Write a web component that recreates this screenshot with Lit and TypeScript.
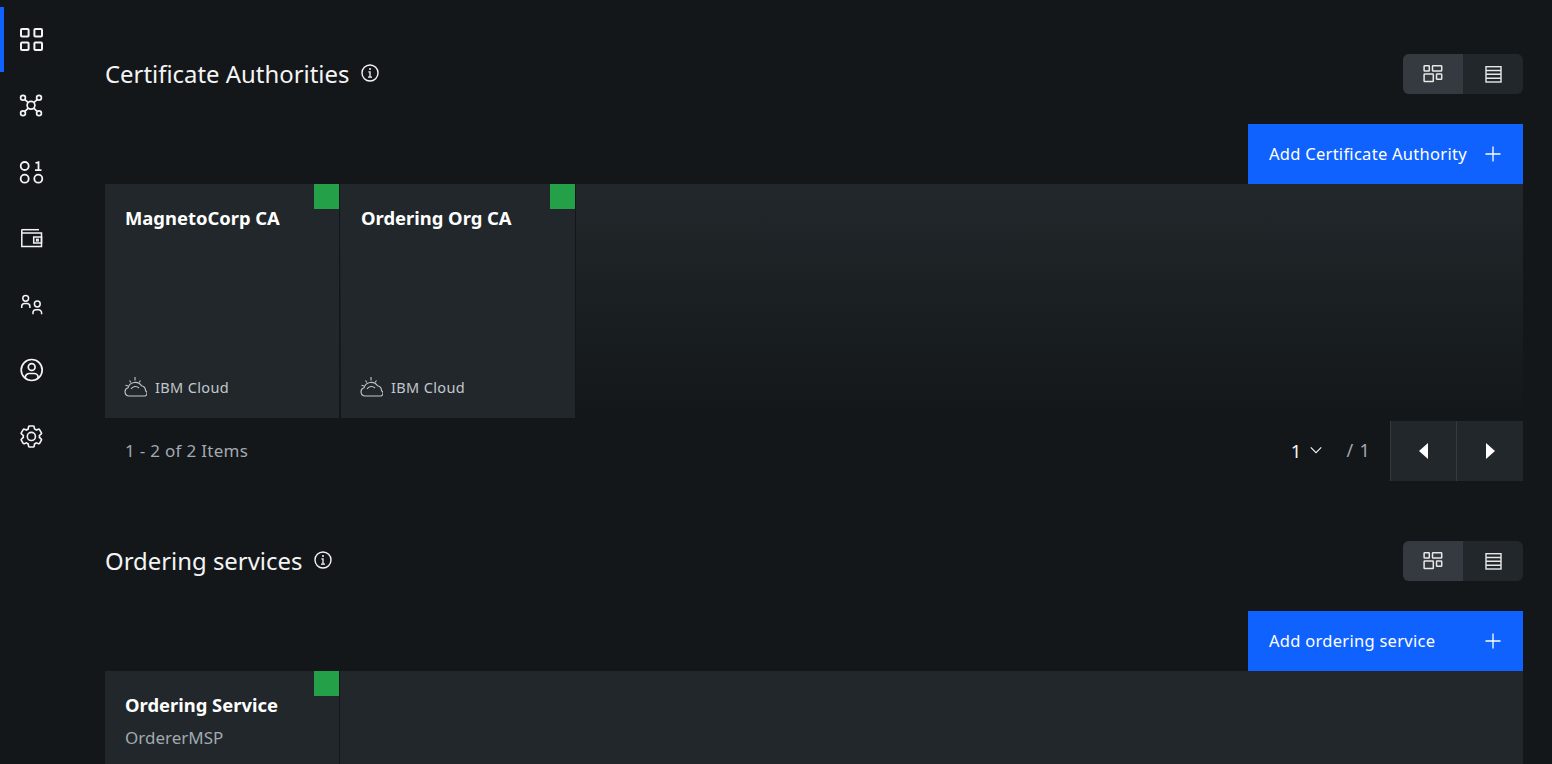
import { LitElement, html, css, svg } from "lit";
import { customElement } from "lit/decorators.js";

const ic = (size: number, body: unknown, box = size) => html`<svg width=${size} height=${size} viewBox="0 0 ${box} ${box}" fill="none" stroke="currentColor">${body}</svg>`;

const gear = "M27,16.76c0-.25,0-.5,0-.76s0-.51,0-.77l1.92-1.68A2,2,0,0,0,29.3,11L26.94,7a2,2,0,0,0-1.73-1,2,2,0,0,0-.64.1l-2.43.82a11.35,11.35,0,0,0-1.31-.75l-.51-2.52a2,2,0,0,0-2-1.61H13.64a2,2,0,0,0-2,1.61l-.51,2.52a11.48,11.48,0,0,0-1.32.75L7.43,6.06A2,2,0,0,0,6.79,6,2,2,0,0,0,5.06,7L2.7,11a2,2,0,0,0,.41,2.51L5,15.24c0,.25,0,.5,0,.76s0,.51,0,.77L3.11,18.45A2,2,0,0,0,2.7,21L5.06,25a2,2,0,0,0,1.73,1,2,2,0,0,0,.64-.1l2.43-.82a11.35,11.35,0,0,0,1.31.75l.51,2.52a2,2,0,0,0,2,1.61h4.72a2,2,0,0,0,2-1.61l.51-2.52a11.48,11.48,0,0,0,1.32-.75l2.42.82a2,2,0,0,0,.64.1,2,2,0,0,0,1.73-1L29.3,21a2,2,0,0,0-.41-2.51ZM25.21,24l-3.43-1.16a8.86,8.86,0,0,1-2.71,1.57L18.36,28H13.64l-.71-3.55a9.36,9.36,0,0,1-2.7-1.57L6.79,24,4.43,20l2.72-2.4a8.9,8.9,0,0,1,0-3.13L4.43,12,6.79,8l3.43,1.16a8.86,8.86,0,0,1,2.71-1.57L13.64,4h4.72l.71,3.55a9.36,9.36,0,0,1,2.7,1.57L25.21,8,27.57,12l-2.72,2.4a8.9,8.9,0,0,1,0,3.13L27.57,20Z M16,22a6,6,0,1,1,6-6A5.94,5.94,0,0,1,16,22Zm0-10a3.91,3.91,0,0,0-4,4,3.91,3.91,0,0,0,4,4,3.91,3.91,0,0,0,4-4A3.91,3.91,0,0,0,16,12Z";

const navIcons = [
  svg`<g stroke-width="2"><rect x="5" y="5" width="7.6" height="7.6" rx="1"/><rect x="18.400" y="5" width="7.6" height="7.6" rx="1"/><rect x="5" y="18.400" width="7.6" height="7.6" rx="1"/><rect x="18.400" y="18.400" width="7.6" height="7.6" rx="1"/></g>`,
  svg`<g stroke-width="1.7"><circle cx="15" cy="15.3" r="3.9"/><circle cx="7" cy="7.7" r="2.4"/><circle cx="23" cy="7.7" r="2.4"/><circle cx="7" cy="23.3" r="2.4"/><circle cx="23" cy="23.3" r="2.4"/><path d="M8.6 9.3l3.7 3.4M21.400 9.3l-3.700 3.400M8.600 21.700l3.700-3.500M21.400 21.700l-3.700-3.500"/></g>`,
  svg`<g stroke-width="1.8"><circle cx="8.700" cy="10" r="4"/><circle cx="8.700" cy="22.700" r="4"/><circle cx="22.300" cy="22.700" r="4"/><path d="M19.500 7l3-.8v8M19 14.200h6.500"/></g>`,
  svg`<g stroke-width="1.500"><path d="M5.500 7.700h17.500"/><path d="M5.800 7.700V24.500h19.700V11H5.800"/><rect x="17.700" y="15" width="7.800" height="6"/><rect x="20.500" y="17.200" width="1.800" height="1.800" stroke-width="1.200"/></g>`,
  svg`<g stroke-width="1.500"><circle cx="9.700" cy="10.300" r="2.900"/><path d="M5.700 20v-1.500a3 3 0 0 1 3-3h2.200a3 3 0 0 1 3 3V20"/><circle cx="21.300" cy="16" r="2.900"/><path d="M17 26.300v-1.500a3 3 0 0 1 3-3h2.600a3 3 0 0 1 3 3v1.500"/></g>`,
  svg`<g stroke-width="1.700"><circle cx="15.700" cy="16" r="10.500"/><circle cx="15.700" cy="13" r="3.400"/><path d="M9.300 24V23.500a4 4 0 0 1 4-4h4.800a4 4 0 0 1 4 4v.5"/></g>`,
  svg`<g transform="translate(2.400 3.500) scale(.81)"><path d="${gear}" fill="currentColor" stroke="none"/></g>`,
];

const tilesIcon = svg`<g stroke-width="1.500"><rect x="3.100" y="3.800" width="5.200" height="5.200" rx=".6"/><rect x="11.500" y="3.800" width="9.200" height="5.200" rx=".6"/><rect x="3.100" y="12.100" width="9.200" height="7.500" rx=".6"/><rect x="15.500" y="12.100" width="5.200" height="5.200" rx=".6"/></g>`;
const listIcon = svg`<g stroke-width="1.400"><rect x="5" y="4.700" width="15" height="15.300"/><path d="M5 8.500h15M5 12.300h15M5 16.200h15"/></g>`;
const plus = svg`<path d="M10 2.500v15M2.500 10h15" stroke-width="1.300"/>`;
const info = svg`<g stroke-width="1.400"><circle cx="10" cy="10" r="8"/><path d="M8 14.200h4M10 14.200V8.800H8.400" stroke-width="1.300"/><circle cx="10" cy="6" r="1" fill="currentColor" stroke="none"/></g>`;
const cloud = svg`<g stroke-width="1.100"><path d="M6 20a4.200 4.200 0 0 1-1-8.200a7.500 7.500 0 0 1 13.500-2a5 5 0 0 1 4 5a2.800 2.800 0 0 1-.5 5.200z"/><path d="M8 13a5 5 0 0 1 8-1"/><path d="M12 1v3.500M6.500 4.500l1.500 2M17.500 4.500l-1.500 2M2.500 9.300l2.500.7"/></g>`;

@customElement("app-root")
export class AppRoot extends LitElement {
  static styles = css`
    :host { display: block; height: 764px; overflow: hidden; background: #13171a; color: #f4f4f4; font-family: "Noto Sans", "Open Sans", sans-serif; }
    .page { display: flex; height: 764px; }
    .side { width: 64px; flex: none; padding-top: 7px; display: flex; flex-direction: column; gap: 1.170px; }
    .nav { height: 65px; display: flex; align-items: center; justify-content: center; color: #f4f4f4; box-sizing: border-box; }
    .nav.on { box-shadow: inset 4px 0 0 #0f62fe; }
    .main { flex: 1; padding: 54px 29px 0 41px; min-width: 0; }
    .head { display: flex; align-items: center; justify-content: space-between; height: 40px; }
    .title { display: flex; align-items: center; gap: 11px; }
    h2 { margin: 0; font-size: 23.900px; font-weight: 400; line-height: 40px; color: #f4f4f4; }
    .title svg { color: #f4f4f4; margin-top: -2px; }
    .toggle { display: flex; width: 120px; height: 40px; border-radius: 6px; overflow: hidden; background: #21272a; }
    .toggle span { flex: 1; display: flex; align-items: center; justify-content: center; color: #e8e8e8; }
    .toggle .sel { background: #343a3f; }
    .actions { display: flex; justify-content: flex-end; margin-top: 30px; }
    .add { width: 275px; height: 60px; background: #0f62fe; color: #fff; display: flex; align-items: center; justify-content: space-between; padding: 0 20px 0 21px; box-sizing: border-box; font-size: 16.500px; letter-spacing: .28px; }
    .add span { padding-bottom: 2px; }
    .grid { display: flex; gap: 2px; height: 234px; background: linear-gradient(#21272a 4%, #13171a 100%); }
    .grid.last { height: 120px; background: #21272a; }
    .card { width: 234px; background: #21272a; position: relative; box-sizing: border-box; padding: 22px 20px 0; display: flex; flex-direction: column; box-shadow: 1px 0 0 #13171a; }
    .card .dot { position: absolute; top: 0; right: 0; width: 25px; height: 25px; background: #24a148; }
    .name { font-size: 18.400px; font-weight: 700; line-height: 24px; color: #fff; }
    .sub { font-size: 17px; line-height: 24px; color: #a2a9b0; margin-top: 9px; }
    .foot { margin-top: auto; margin-bottom: 18px; display: flex; align-items: center; gap: 8px; font-size: 14.500px; letter-spacing: .36px; color: #c1c7cd; margin-left: -2px; }
    .foot span { padding-bottom: 2px; }
    .foot svg { color: #c1c7cd; }
    .pager { display: flex; align-items: center; height: 60px; margin: 3px 0 60px; padding-left: 20px; color: #a2a9b0; font-size: 17px; letter-spacing: .3px; }
    .count { flex: 1; padding-bottom: 2px; }
    .cur { color: #f4f4f4; font-size: 18.500px; display: flex; align-items: center; gap: 8px; letter-spacing: 0; padding-bottom: 2px; }
    .of { margin: 0 20px 0 23px; font-size: 18px; word-spacing: 1px; padding-bottom: 2px; }
    .pg { width: 66px; height: 60px; background: #21272a; display: flex; align-items: center; justify-content: center; border-left: 1px solid #343a3f; box-sizing: border-box; color: #fff; }
    .pg + .pg { width: 67px; }
  `;

  section(title: string, add: string, cards: unknown, last = false) {
    return html`
      <div class="head">
        <div class="title"><h2>${title}</h2>${ic(20, info)}</div>
        <div class="toggle"><span class="sel">${ic(24, tilesIcon)}</span><span>${ic(24, listIcon)}</span></div>
      </div>
      <div class="actions"><div class="add"><span>${add}</span>${ic(20, plus)}</div></div>
      <div class="grid ${last ? "last" : ""}">${cards}</div>`;
  }

  card(name: string) {
    return html`<div class="card"><span class="dot"></span><div class="name">${name}</div>
      <div class="foot">${ic(24, cloud)}<span>IBM Cloud</span></div></div>`;
  }

  render() {
    return html`<div class="page">
      <nav class="side">
        ${navIcons.map((b, i) => html`<div class="nav ${i === 0 ? "on" : ""}">${ic(32, b)}</div>`)}
      </nav>
      <main class="main">
        ${this.section("Certificate Authorities", "Add Certificate Authority", html`${this.card("MagnetoCorp CA")}${this.card("Ordering Org CA")}`)}
        <div class="pager">
          <span class="count">1 - 2 of 2 Items</span>
          <span class="cur">1 <svg width="14" height="14" viewBox="0 0 16 16" fill="none" stroke="currentColor" stroke-width="1.300"><path d="M2 5l6 6 6-6"/></svg></span>
          <span class="of">/ 1</span>
          <div class="pg"><svg width="12" height="16" viewBox="0 0 12 16" fill="currentColor"><path d="M10 0v16L1 8z"/></svg></div>
          <div class="pg"><svg width="12" height="16" viewBox="0 0 12 16" fill="currentColor"><path d="M2 0v16l9-8z"/></svg></div>
        </div>
        ${this.section("Ordering services", "Add ordering service", html`<div class="card"><span class="dot"></span><div class="name">Ordering Service</div><div class="sub">OrdererMSP</div></div>`, true)}
      </main>
    </div>`;
  }
}
